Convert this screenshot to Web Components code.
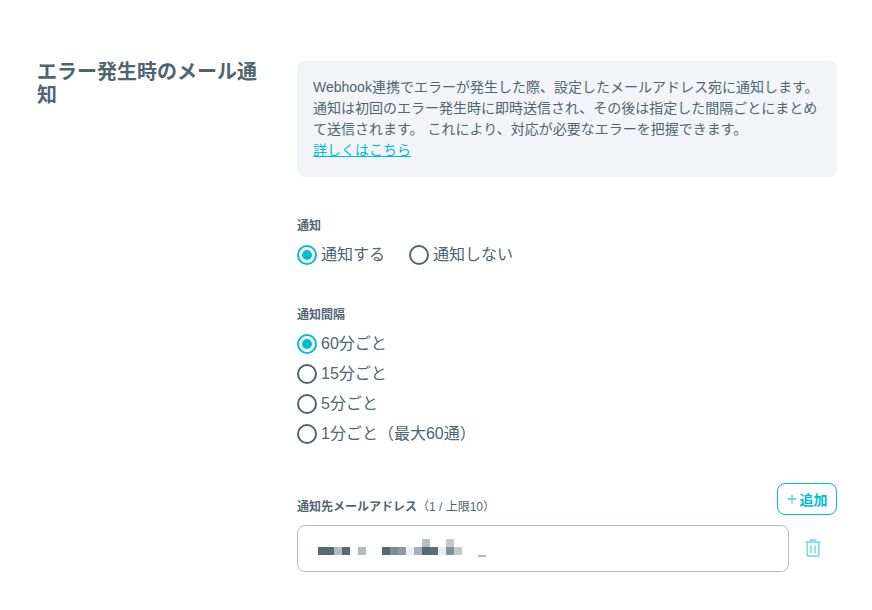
<!DOCTYPE html>
<html lang="ja">
<head>
<meta charset="utf-8">
<title>エラー発生時のメール通知</title>
<style>
  html, body { margin: 0; background: #fff; }
  body {
    font-family: "Liberation Sans", "Noto Sans CJK JP", sans-serif;
    color: #4f6570;
  }
</style>
</head>
<body>
<mail-settings>
  <span slot="title">エラー発生時のメール通知</span>

  <info-box>
    Webhook連携でエラーが発生した際、設定したメールアドレス宛に通知します。<br>
    通知は初回のエラー発生時に即時送信され、その後は指定した間隔ごとにまとめて送信されます。 これにより、対応が必要なエラーを把握できます。<br>
    <a href="#">詳しくはこちら</a>
  </info-box>

  <form-field label="通知" style="margin-top:40px">
    <div style="display:flex;gap:24px">
      <radio-item checked>通知する</radio-item>
      <radio-item>通知しない</radio-item>
    </div>
  </form-field>

  <form-field label="通知間隔" style="margin-top:38px">
    <radio-item checked>60分ごと</radio-item>
    <radio-item>15分ごと</radio-item>
    <radio-item>5分ごと</radio-item>
    <radio-item>1分ごと（最大60通）</radio-item>
  </form-field>

  <email-list label="通知先メールアドレス" count="（1 / 上限10）"></email-list>
</mail-settings>

<script>
class MailSettings extends HTMLElement {
  constructor() {
    super();
    const shadowRoot = this.attachShadow({ mode: "open" });
    shadowRoot.innerHTML = `
      <style>
        :host {
          display: grid;
          grid-template-columns: 260px 540px;
          padding: 61px 0 0 37px;
        }
        h2 {
          margin: 0;
          width: 224px;
          font-size: 20px;
          font-weight: 700;
          line-height: 23px;
        }
        .content { display: block; }
      </style>
      <h2><slot name="title"></slot></h2>
      <div class="content"><slot></slot></div>`;
  }
}

class InfoBox extends HTMLElement {
  constructor() {
    super();
    const shadowRoot = this.attachShadow({ mode: "open" });
    shadowRoot.innerHTML = `
      <style>
        :host {
          display: block;
          padding: 16px;
          background: #f3f4f8;
          border-radius: 8px;
          font-size: 14px;
          line-height: 21px;
        }
        ::slotted(a) { color: #00bcd4; }
      </style>
      <slot></slot>`;
  }
}

class FormField extends HTMLElement {
  constructor() {
    super();
    const shadowRoot = this.attachShadow({ mode: "open" });
    shadowRoot.innerHTML = `
      <style>
        :host { display: block; }
        .label {
          font-size: 12px;
          font-weight: 700;
          line-height: 18px;
          margin-bottom: 3px;
        }
      </style>
      <div class="label"></div>
      <slot></slot>`;
    shadowRoot.querySelector(".label").textContent = this.getAttribute("label");
  }
}

class RadioItem extends HTMLElement {
  constructor() {
    super();
    const shadowRoot = this.attachShadow({ mode: "open" });
    shadowRoot.innerHTML = `
      <style>
        :host {
          display: flex;
          align-items: center;
          gap: 4px;
          height: 30px;
          font-size: 16px;
        }
        .dot {
          box-sizing: border-box;
          width: 20px;
          height: 20px;
          margin-top: 3px;
          border: 2px solid #4f6570;
          border-radius: 50%;
          display: flex;
          align-items: center;
          justify-content: center;
        }
        :host([checked]) .dot { border-color: #00bcd4; }
        :host([checked]) .dot::after {
          content: "";
          width: 10px;
          height: 10px;
          border-radius: 50%;
          background: #00bcd4;
        }
      </style>
      <span class="dot"></span>
      <slot></slot>`;
  }
}

class EmailList extends HTMLElement {
  constructor() {
    super();
    const shadowRoot = this.attachShadow({ mode: "open" });
    shadowRoot.innerHTML = `
      <style>
        :host { display: block; margin-top: 36px; }
        .head {
          display: flex;
          align-items: flex-end;
          justify-content: space-between;
          margin-bottom: 10px;
        }
        .label { font-size: 12px; line-height: 18px; margin-bottom: -1px; }
        .label b { font-weight: 700; }
        button {
          box-sizing: border-box;
          display: flex;
          align-items: center;
          justify-content: center;
          gap: 3px;
          width: 60px;
          height: 32px;
          padding: 0;
          background: #fff;
          border: 1px solid #00bcd4;
          border-radius: 8px;
          color: #00bcd4;
          font: 700 14px "Liberation Sans", "Noto Sans CJK JP", sans-serif;
        }
        .row { display: flex; align-items: center; gap: 16px; }
        .input {
          box-sizing: border-box;
          width: 492px;
          height: 47px;
          padding: 13px 20px;
          border: 1px solid #b0bcc2;
          border-radius: 8px;
        }
        .input svg { display: block; }
        .trash { display: block; margin-top: -2px; }
      </style>
      <div class="head">
        <span class="label"><b></b><span class="count"></span></span>
        <button>
          <svg width="10" height="10" viewBox="0 0 10 10"><path d="M5 0.5v9M0.5 5h9" stroke="#4dd0e1" stroke-width="1.3" fill="none"/></svg>
          追加
        </button>
      </div>
      <div class="row">
        <div class="input">
          <svg width="170" height="19" viewBox="0 0 170 19">
            <g shape-rendering="crispEdges">
              <rect x="0" y="8" width="16" height="8" fill="#546a74"/>
              <rect x="16" y="8" width="8" height="8" fill="#b0bcc2"/>
              <rect x="24" y="8" width="8" height="8" fill="#546a74"/>
              <rect x="40" y="8" width="8" height="8" fill="#b0bcc2"/>
              <rect x="64" y="8" width="8" height="8" fill="#546a74"/>
              <rect x="72" y="8" width="8" height="8" fill="#7a8c94"/>
              <rect x="80" y="8" width="8" height="8" fill="#8a9aa1"/>
              <rect x="88" y="8" width="8" height="8" fill="#eef0f1"/>
              <rect x="96" y="8" width="8" height="8" fill="#a6b2b8"/>
              <rect x="104" y="0" width="8" height="8" fill="#b5c0c5"/>
              <rect x="104" y="8" width="8" height="8" fill="#546a74"/>
              <rect x="112" y="8" width="8" height="8" fill="#5a7079"/>
              <rect x="120" y="8" width="8" height="8" fill="#e9eced"/>
              <rect x="128" y="0" width="8" height="8" fill="#c0c9cd"/>
              <rect x="128" y="8" width="8" height="8" fill="#7e9098"/>
              <rect x="136" y="8" width="8" height="8" fill="#c0c9cd"/>
              <rect x="160" y="16" width="8" height="2" fill="#b0bcc2"/>
            </g>
          </svg>
        </div>
        <svg class="trash" width="16" height="18" viewBox="0 0 16 18" fill="none" stroke="#7fdde9" stroke-width="1.7">
          <path d="M0.5 3.2h15M5.5 3V1.2h5V3M2.2 3.2V16a1.2 1.2 0 0 0 1.2 1.2h9.2a1.2 1.2 0 0 0 1.2-1.2V3.2M6 6.5v7.5M10 6.5v7.5"/>
        </svg>
      </div>`;
    shadowRoot.querySelector(".label b").textContent = this.getAttribute("label");
    shadowRoot.querySelector(".count").textContent = this.getAttribute("count");
  }
}

window.customElements.define("mail-settings", MailSettings);
window.customElements.define("info-box", InfoBox);
window.customElements.define("form-field", FormField);
window.customElements.define("radio-item", RadioItem);
window.customElements.define("email-list", EmailList);
</script>
</body>
</html>
